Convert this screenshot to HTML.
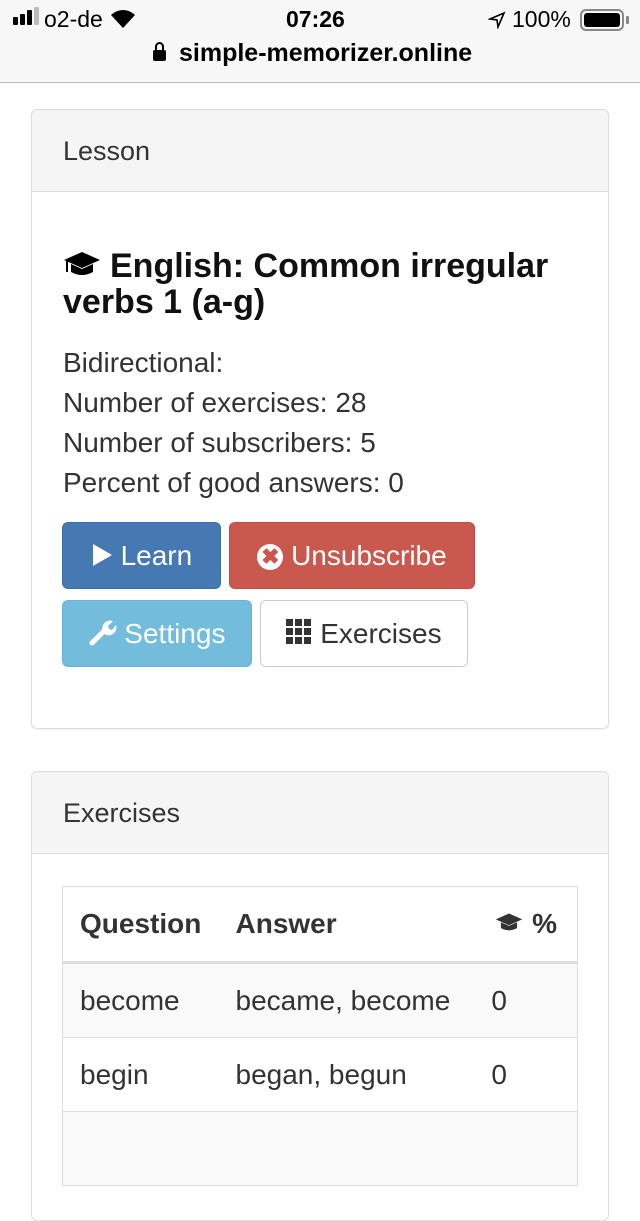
<!DOCTYPE html>
<html><head><style>
*{box-sizing:border-box;margin:0;padding:0}
body{width:640px;height:1136px;overflow:hidden;background:#fff;font-family:"Liberation Sans",sans-serif;color:#333;position:relative}
.sb{position:absolute;left:0;top:0;width:640px;height:83px;background:#f7f7f7;border-bottom:1px solid #bbb}
.abs{position:absolute}
.panel{position:absolute;left:31px;width:578px;border:1px solid #ddd;border-radius:6px;background:#fff;box-shadow:0 1px 2px rgba(0,0,0,.05)}
.ph{height:82px;background:#f5f5f5;border-bottom:1px solid #ddd;font-size:27px;padding-left:31px;line-height:82px;border-radius:6px 6px 0 0}
.btn{position:absolute;height:67px;border-radius:6px;font-size:28px;line-height:65px;color:#fff;text-align:center;border:1px solid;white-space:nowrap}
td,th{font-size:28px;text-align:left;padding:0 17px;}
</style></head><body>
<div class="sb">
 <div class="abs" style="left:13px;top:17px;width:5px;height:8px;background:#000;border-radius:1px"></div>
 <div class="abs" style="left:20px;top:14px;width:5px;height:11px;background:#000;border-radius:1px"></div>
 <div class="abs" style="left:27px;top:10px;width:5px;height:15px;background:#000;border-radius:1px"></div>
 <div class="abs" style="left:34px;top:7px;width:5px;height:18px;background:#bbb;border-radius:1px"></div>
 <div class="abs" style="left:44px;top:6px;font-size:23px;color:#000">o2-de</div>
 <svg class="abs" style="left:110px;top:9px" width="26" height="20" viewBox="0 0 26 20"><path d="M13 19 L1 6 A17 17 0 0 1 25 6Z" fill="#000"/></svg>
 <div class="abs" style="left:286px;top:6px;font-size:23px;font-weight:bold;color:#000">07:26</div>
 <svg class="abs" style="left:488px;top:11px" width="18" height="18" viewBox="0 0 18 18"><path d="M2 8 L16 2 L10 16 L9 9Z" fill="none" stroke="#000" stroke-width="1.6"/></svg>
 <div class="abs" style="left:512px;top:6px;font-size:23px;color:#000">100%</div>
 <div class="abs" style="left:580px;top:9px;width:44px;height:22px;border:2px solid #888;border-radius:6px;padding:2px"><div style="width:100%;height:100%;background:#000;border-radius:3px"></div></div>
 <div class="abs" style="left:626px;top:16px;width:3px;height:8px;background:#888;border-radius:1px"></div>
 <div class="abs" style="left:153px;top:50px;width:13px;height:11px;background:#000;border-radius:2px"></div>
 <div class="abs" style="left:155px;top:42px;width:9px;height:12px;border:2px solid #000;border-radius:5px 5px 0 0"></div>
 <div class="abs" style="left:179px;top:39px;font-size:25px;font-weight:bold;color:#000">simple-memorizer.online</div>
</div>

<div class="panel" style="top:109px;height:620px">
 <div class="ph">Lesson</div>
 <svg class="abs" style="left:30px;top:140px" width="40" height="30" viewBox="0 0 40 30"><path d="M20 2 L38 10 L20 18 L2 10Z" fill="#000"/><path d="M9 14 V22 Q20 28 31 22 V14 L20 19Z" fill="#000"/><path d="M5 11 V22" stroke="#000" stroke-width="2"/></svg>
 <div class="abs" style="left:31px;top:138px;width:530px;font-size:34px;font-weight:bold;line-height:36px;color:#111;text-indent:47px">English: Common irregular verbs 1 (a-g)</div>
 <div class="abs" style="left:31px;top:233px;font-size:28px;line-height:40px">Bidirectional:<br>Number of exercises: 28<br>Number of subscribers: 5<br>Percent of good answers: 0</div>
 <div class="btn" style="left:30px;top:412px;width:159px;background:#4679b2;border-color:#3e6da4"><svg width="22" height="24" viewBox="0 0 22 24" style="vertical-align:-2px"><path d="M2 1 L21 12 L2 23Z" fill="#fff"/></svg> Learn</div>
 <div class="btn" style="left:197px;top:412px;width:246px;background:#c9594f;border-color:#c34a40"><span style="display:inline-block;width:26px;height:26px;border-radius:50%;background:#fff;color:#c9594f;font-size:22px;line-height:26px;font-weight:bold;vertical-align:1px">✖</span> Unsubscribe</div>
 <div class="btn" style="left:30px;top:490px;width:190px;background:#74bcdc;border-color:#68b3d5"><svg width="28" height="28" viewBox="0 0 28 28" style="vertical-align:-3px"><path d="M3 25 L15 13" stroke="#fff" stroke-width="5" stroke-linecap="round"/><path d="M14 14 A8 8 0 0 1 24 3 L19 8 L20 11 L23 12 L27 7 A8 8 0 0 1 17 17Z" fill="#fff"/></svg> Settings</div>
 <div class="btn" style="left:228px;top:490px;width:208px;background:#fff;border-color:#ccc;color:#333"><svg width="26" height="26" viewBox="0 0 26 26" style="vertical-align:-2px"><g fill="#333"><rect x="0" y="0" width="7" height="7"/><rect x="9" y="0" width="7" height="7"/><rect x="18" y="0" width="7" height="7"/><rect x="0" y="9" width="7" height="7"/><rect x="9" y="9" width="7" height="7"/><rect x="18" y="9" width="7" height="7"/><rect x="0" y="18" width="7" height="7"/><rect x="9" y="18" width="7" height="7"/><rect x="18" y="18" width="7" height="7"/></g></svg> Exercises</div>
</div>

<div class="panel" style="top:771px;height:450px">
 <div class="ph">Exercises</div>
 <table class="abs" style="left:30px;top:114px;width:516px;border-collapse:collapse;border:1px solid #ddd">
  <tr style="height:76px;border-bottom:3px solid #ddd"><th style="width:156px">Question</th><th>Answer</th><th style="text-align:right;padding-right:20px;white-space:nowrap"><svg width="30" height="22" viewBox="0 0 40 30" style="vertical-align:-1px"><path d="M20 2 L38 10 L20 18 L2 10Z" fill="#333"/><path d="M9 14 V22 Q20 28 31 22 V14 L20 19Z" fill="#333"/></svg> %</th></tr>
  <tr style="height:75px;background:#f9f9f9;border-bottom:1px solid #ddd"><td>become</td><td>became, become</td><td>0</td></tr>
  <tr style="height:74px;border-bottom:1px solid #ddd"><td>begin</td><td>began, begun</td><td>0</td></tr>
  <tr style="height:74px;background:#f9f9f9"><td></td><td></td><td></td></tr>
 </table>
</div>
</body></html>
